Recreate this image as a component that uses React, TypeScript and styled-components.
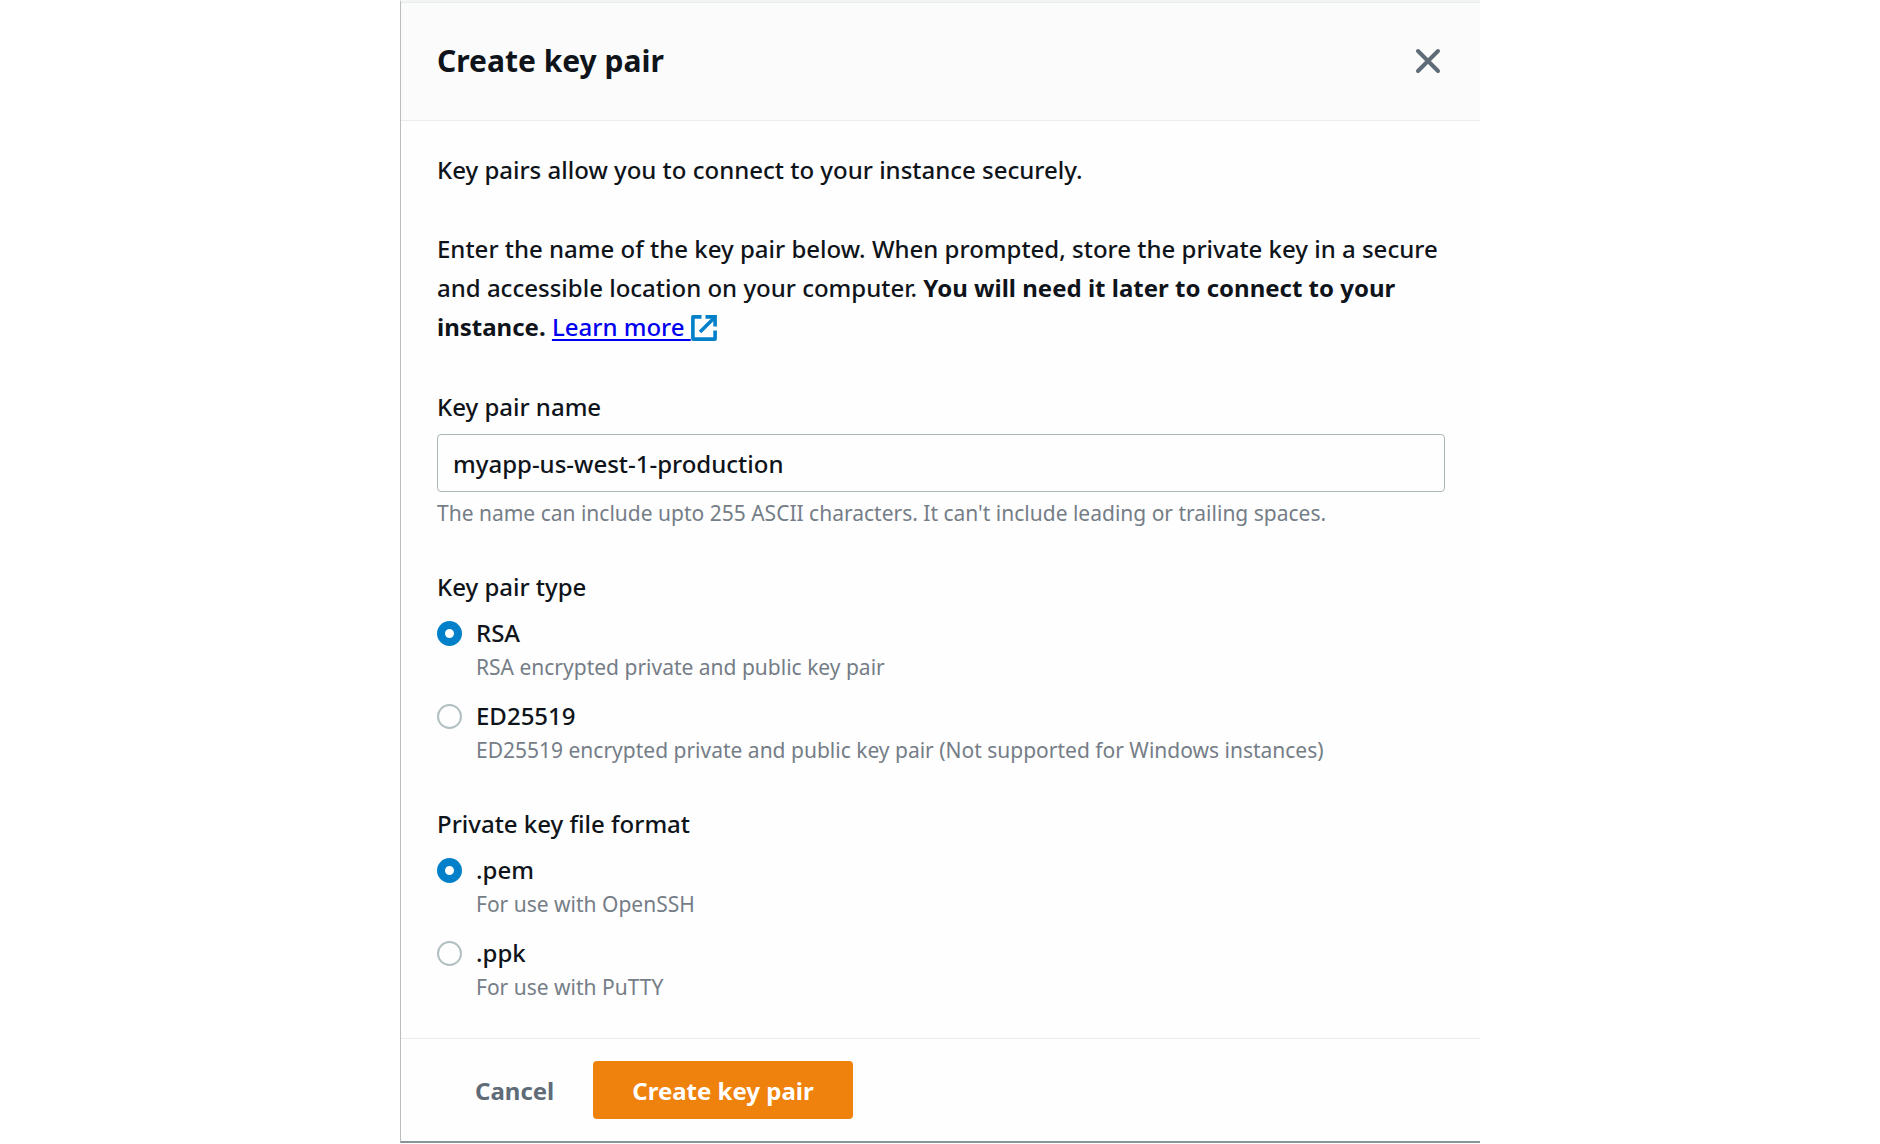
import React, { useState } from 'react';
import styled, { createGlobalStyle } from 'styled-components';

const GlobalStyle = createGlobalStyle`
  * { box-sizing: border-box; }
  body {
    margin: 0;
    background: #ffffff;
    color: #0f141a;
    font-family: "Noto Sans", "Open Sans", sans-serif;
    font-size: 24px;
    font-weight: 500;
    line-height: 39px;
  }
  button, input { font: inherit; color: inherit; }
`;

const Dialog = styled.main`
  width: 100%;
  max-width: 1080px;
  margin: 0 auto;
  background: #fefefe;
  border-top: 2px solid #f3f5f5;
  border-left: 1px solid #b9bdbe;
  border-bottom: 2px solid #87959a;
`;

const Header = styled.header`
  display: flex;
  align-items: center;
  justify-content: space-between;
  min-height: 119px;
  padding: 0 38px 2px 36px;
  background: #fbfbfb;
  border-top: 1px solid #eaeded;
  border-bottom: 1px solid #eaeded;
`;

const Title = styled.h1`
  margin: 0;
  font-size: 30px;
  line-height: 40px;
  font-weight: 700;
`;

const CloseButton = styled.button`
  display: flex;
  padding: 0;
  border: 0;
  background: none;
  color: #5f6b77;
  cursor: pointer;
`;

const Body = styled.form`
  padding: 29px 35px 0 36px;
`;

const Intro = styled.div`
  display: flex;
  flex-direction: column;
  gap: 40px;
  margin-bottom: 42px;
`;

const Paragraph = styled.p`
  margin: 0;

  strong { font-weight: 700; }
`;

const LearnMore = styled.a`
  color: #0000ee;
  text-decoration: underline;
  text-decoration-thickness: 2px;
  text-underline-offset: 3px;

  svg {
    vertical-align: -5px;
    color: #0080c8;
  }
`;

const Fields = styled.div`
  display: flex;
  flex-direction: column;
  gap: 40px;
  padding-bottom: 36px;
`;

const Field = styled.div`
  display: flex;
  flex-direction: column;
`;

const FieldLabel = styled.label`
  line-height: 38px;
  margin-bottom: 8px;
`;

const TextInput = styled.input`
  width: 100%;
  height: 58px;
  padding: 0 15px;
  border: 1px solid #aab7b8;
  border-radius: 4px;
  background: #fefefe;
  margin-bottom: 6px;
  outline: none;
`;

const Hint = styled.span`
  display: block;
  color: #757d87;
  font-size: 21px;
  font-weight: 400;
  line-height: 30px;
`;

const RadioGroup = styled.fieldset`
  display: flex;
  flex-direction: column;
  margin: 0;
  padding: 0;
  border: 0;
  min-width: 0;
`;

const GroupLabel = styled.legend`
  padding: 0;
  line-height: 38px;
  margin-bottom: 8px;
`;

const Options = styled.div`
  display: flex;
  flex-direction: column;
  gap: 15px;
`;

const Option = styled.label`
  display: grid;
  grid-template-columns: 25px 1fr;
  column-gap: 14px;
  align-items: center;
  cursor: pointer;

  ${Hint} { grid-column: 2; }
`;

const OptionName = styled.span`
  line-height: 38px;
`;

const Radio = styled.input`
  appearance: none;
  width: 25px;
  height: 25px;
  margin: 0;
  border: 2px solid #b2bfc0;
  border-radius: 50%;
  background: #fefefe;

  &:checked { border: 8px solid #0080c8; }
`;

const Footer = styled.footer`
  display: flex;
  align-items: center;
  padding: 22px 35px;
  border-top: 1px solid #ebeded;
`;

const Button = styled.button<{ $primary?: boolean }>`
  height: 58px;
  padding: 0 39px;
  border: 0;
  border-radius: 4px;
  background: ${(p) => (p.$primary ? '#ef810d' : 'transparent')};
  color: ${(p) => (p.$primary ? '#ffffff' : '#5f6b77')};
  font-weight: 700;
  cursor: pointer;
`;

type Choice = { value: string; hint: string };

const keyTypes: Choice[] = [
  { value: 'RSA', hint: 'RSA encrypted private and public key pair' },
  {
    value: 'ED25519',
    hint: 'ED25519 encrypted private and public key pair (Not supported for Windows instances)',
  },
];

const fileFormats: Choice[] = [
  { value: '.pem', hint: 'For use with OpenSSH' },
  { value: '.ppk', hint: 'For use with PuTTY' },
];

function ChoiceField({ legend, name, choices }: { legend: string; name: string; choices: Choice[] }) {
  const [selected, setSelected] = useState(choices[0].value);
  return (
    <RadioGroup>
      <GroupLabel>{legend}</GroupLabel>
      <Options>
        {choices.map((choice) => (
          <Option key={choice.value}>
            <Radio
              type="radio"
              name={name}
              value={choice.value}
              checked={selected === choice.value}
              onChange={() => setSelected(choice.value)}
            />
            <OptionName>{choice.value}</OptionName>
            <Hint>{choice.hint}</Hint>
          </Option>
        ))}
      </Options>
    </RadioGroup>
  );
}

function CloseIcon() {
  return (
    <svg width="28" height="28" viewBox="0 0 28 28" fill="none" stroke="currentColor" strokeWidth="4" strokeLinecap="round" aria-hidden="true">
      <path d="M4 4 24 24M24 4 4 24" />
    </svg>
  );
}

function ExternalIcon() {
  return (
    <svg width="26" height="26" viewBox="0 0 26 26" fill="none" stroke="currentColor" strokeWidth="3.6" aria-hidden="true">
      <path d="M10.5 1.9H1.9V24.1H24.1V15.5" strokeLinejoin="round" />
      <path d="M14.5 1.9H24.1V11.5" />
      <path d="M23.6 2.4 9 17" />
    </svg>
  );
}

export default function App() {
  const [name, setName] = useState('myapp-us-west-1-production');
  return (
    <>
      <GlobalStyle />
      <Dialog aria-labelledby="dialog-title">
        <Header>
          <Title id="dialog-title">Create key pair</Title>
          <CloseButton type="button" aria-label="Close">
            <CloseIcon />
          </CloseButton>
        </Header>
        <Body id="key-pair-form" onSubmit={(e) => e.preventDefault()}>
          <Intro>
            <Paragraph>Key pairs allow you to connect to your instance securely.</Paragraph>
            <Paragraph>
              Enter the name of the key pair below. When prompted, store the private key in a secure and
              accessible location on your computer.{' '}
              <strong>You will need it later to connect to your instance.</strong>{' '}
              <LearnMore href="#learn-more">
                Learn more <ExternalIcon />
              </LearnMore>
            </Paragraph>
          </Intro>
          <Fields>
            <Field>
              <FieldLabel htmlFor="key-name">Key pair name</FieldLabel>
              <TextInput
                id="key-name"
                type="text"
                value={name}
                aria-describedby="key-name-hint"
                onChange={(e) => setName(e.target.value)}
              />
              <Hint id="key-name-hint">
                The name can include upto 255 ASCII characters. It can't include leading or trailing spaces.
              </Hint>
            </Field>
            <ChoiceField legend="Key pair type" name="key-type" choices={keyTypes} />
            <ChoiceField legend="Private key file format" name="file-format" choices={fileFormats} />
          </Fields>
        </Body>
        <Footer>
          <Button type="button">Cancel</Button>
          <Button type="submit" form="key-pair-form" $primary>
            Create key pair
          </Button>
        </Footer>
      </Dialog>
    </>
  );
}
